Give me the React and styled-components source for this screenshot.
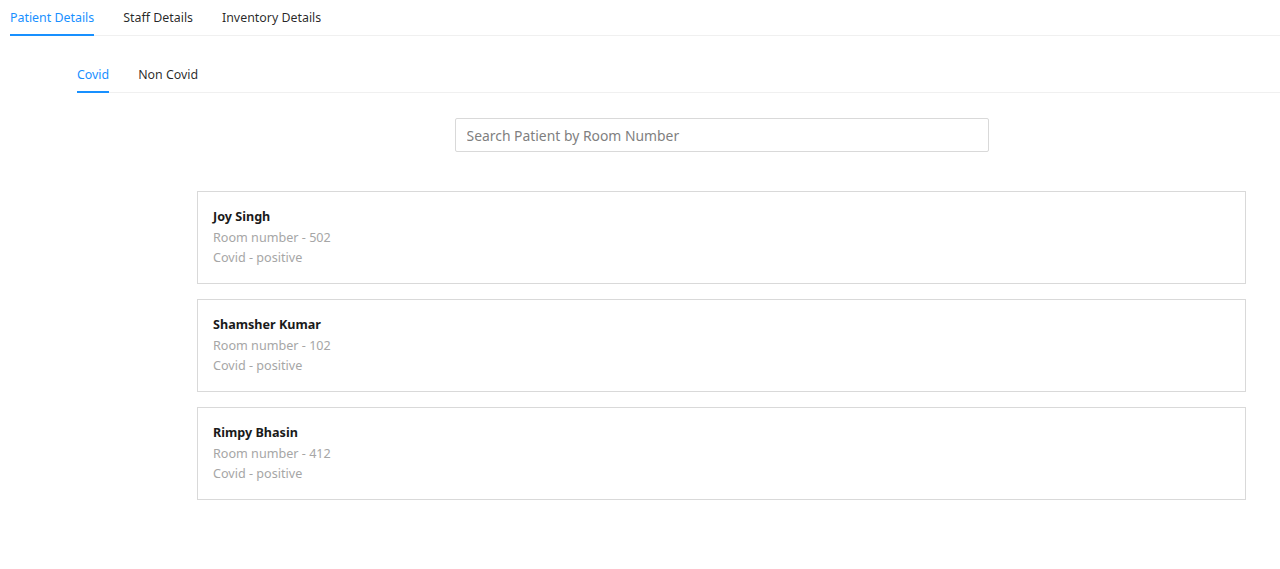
import React, { useState } from 'react';
import styled, { createGlobalStyle } from 'styled-components';

const GlobalStyle = createGlobalStyle`
  body {
    margin: 0;
    background: #fff;
    font-family: "Noto Sans", "Open Sans", sans-serif;
    font-size: 14px;
    color: rgba(0, 0, 0, 0.85);
  }
`;

const Page = styled.div`
  padding: 0 0 0 10px;
`;

const TabBar = styled.div`
  display: flex;
  gap: 29px;
  border-bottom: 1px solid #f0f0f0;
`;

const Tab = styled.div`
  padding: 7px 0 5px;
  line-height: 22px;
  font-size: 12.4px;
  cursor: pointer;
  color: ${(p) => (p.active ? '#1890ff' : 'rgba(0,0,0,0.85)')};
  border-bottom: 2px solid ${(p) => (p.active ? '#1890ff' : 'transparent')};
  margin-bottom: -1px;
`;

const SubSection = styled.div`
  margin: 21px 0 0 67px;
`;

const Content = styled.div`
  margin: 0 34px 0 120px;
`;

const SearchRow = styled.div`
  display: flex;
  justify-content: center;
  padding: 25px 0 0;
`;

const SearchInput = styled.input`
  width: 534px;
  height: 34px;
  box-sizing: border-box;
  border: 1px solid #d9d9d9;
  border-radius: 2px;
  padding: 4px 11px;
  font-family: inherit;
  font-size: 13.9px;
  color: rgba(0, 0, 0, 0.85);
  outline: none;
  &::placeholder {
    color: #7f7f7f;
  }
`;

const List = styled.div`
  display: flex;
  flex-direction: column;
  gap: 15px;
  margin-top: 39px;
`;

const Card = styled.div`
  border: 1px solid #d9d9d9;
  padding: 15px 15px 14.5px;
  line-height: 20.5px;
`;

const Name = styled.div`
  font-weight: 700;
  font-size: 12.6px;
  color: #1a1a1a;
`;

const Info = styled.div`
  font-size: 12.6px;
  color: #a6a6a6;
`;

const patients = [
  { name: 'Joy Singh', room: 502 },
  { name: 'Shamsher Kumar', room: 102 },
  { name: 'Rimpy Bhasin', room: 412 },
];

export default function App() {
  const [tab, setTab] = useState(0);
  const [sub, setSub] = useState(0);
  const [q, setQ] = useState('');
  const shown = patients.filter((p) => String(p.room).includes(q));
  return (
    <Page>
      <GlobalStyle />
      <TabBar>
        {['Patient Details', 'Staff Details', 'Inventory Details'].map((t, i) => (
          <Tab key={t} active={tab === i} onClick={() => setTab(i)}>
            {t}
          </Tab>
        ))}
      </TabBar>
      <SubSection>
        <TabBar>
          {['Covid', 'Non Covid'].map((t, i) => (
            <Tab key={t} active={sub === i} onClick={() => setSub(i)}>
              {t}
            </Tab>
          ))}
        </TabBar>
        <Content>
          <SearchRow>
            <SearchInput
              placeholder="Search Patient by Room Number"
              value={q}
              onChange={(e) => setQ(e.target.value)}
            />
          </SearchRow>
          <List>
            {shown.map((p) => (
              <Card key={p.name}>
                <Name>{p.name}</Name>
                <Info>Room number - {p.room}</Info>
                <Info>Covid - positive</Info>
              </Card>
            ))}
          </List>
        </Content>
      </SubSection>
    </Page>
  );
}
